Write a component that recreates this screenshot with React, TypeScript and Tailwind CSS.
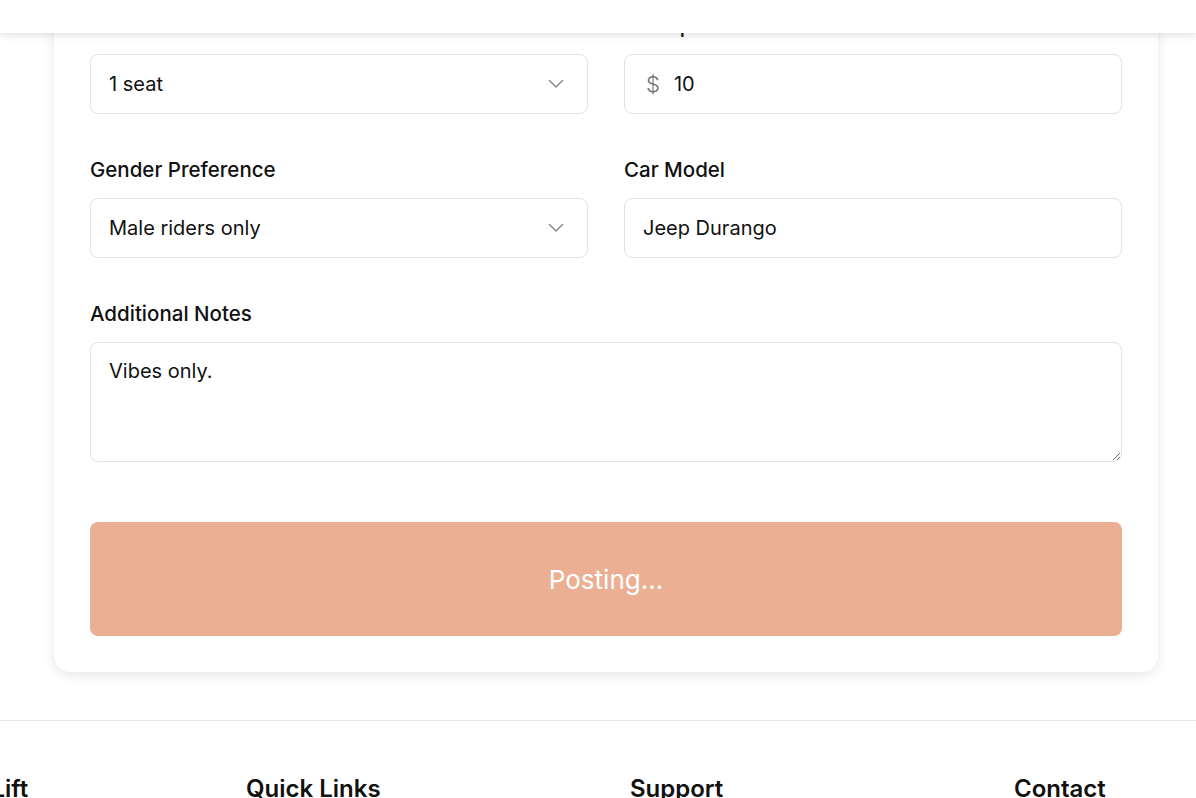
import React from "react";

function Chevron() {
  return (
    <svg width="16" height="10" viewBox="0 0 16 10" fill="none" className="text-[#8a8a8a]">
      <path d="M1.5 1.5 8 8l6.5-6.5" stroke="currentColor" strokeWidth="1.5" strokeLinecap="round" strokeLinejoin="round" />
    </svg>
  );
}

function Field({ label, children }: { label: string; children: React.ReactNode }) {
  return (
    <div className="flex flex-col gap-[14px]">
      <label className="text-[20.5px] leading-[28px] font-medium text-[#111]">{label}</label>
      {children}
    </div>
  );
}

function SelectBox({ value }: { value: string }) {
  return (
    <div className="flex h-[60px] items-center justify-between rounded-lg border border-[#e3e3e3] bg-white pl-[18px] pr-[23px] text-[20px] text-[#111]">
      <span>{value}</span>
      <Chevron />
    </div>
  );
}

function TextBox({ value, prefix }: { value: string; prefix?: string }) {
  return (
    <div
      className={
        prefix
          ? "flex h-[60px] items-center gap-[14px] rounded-lg border border-[#e3e3e3] bg-white px-[21px] text-[20px] text-[#111]"
          : "flex h-[60px] items-center rounded-lg border border-[#e3e3e3] bg-white px-[18px] text-[20px] text-[#111]"
      }
    >
      {prefix && <span className="text-[22px] font-light text-[#707070]">{prefix}</span>}
      <span>{value}</span>
    </div>
  );
}

export default function App() {
  const footerCols = ["Quick Links", "Support", "Contact"];
  return (
    <div className="relative h-[798px] overflow-hidden bg-white font-['Inter',sans-serif] text-[#111]">
      <header className="absolute inset-x-0 top-0 z-10 h-[33px] bg-white shadow-[0_2px_8px_rgba(0,0,0,0.13)]" />

      <main className="-mt-[40px] ml-[54px] w-[1104px]">
        <div className="rounded-2xl bg-white px-9 pt-[52px] pb-9 shadow-[0_3px_12px_rgba(0,0,0,0.1)]">
          <div className="grid grid-cols-2 gap-x-9 gap-y-[42px]">
            <Field label="Seats Available">
              <SelectBox value="1 seat" />
            </Field>
            <Field label="Price per Seat">
              <TextBox prefix="$" value="10" />
            </Field>
            <Field label="Gender Preference">
              <SelectBox value="Male riders only" />
            </Field>
            <Field label="Car Model">
              <TextBox value="Jeep Durango" />
            </Field>
            <div className="col-span-2">
              <Field label="Additional Notes">
                <textarea
                  readOnly
                  value="Vibes only."
                  className="block h-[120px] w-full resize-y rounded-lg border border-[#e3e3e3] bg-white px-[18px] pt-[14px] text-[20px] leading-[28px] text-[#111] outline-none"
                />
              </Field>
            </div>
          </div>

          <button
            disabled
            className="mt-[60px] flex h-[114px] w-full items-center justify-center rounded-lg bg-[#ebb094] text-[26px] text-white"
          >
            Posting...
          </button>
        </div>
      </main>

      <footer className="mt-[48px] border-t border-[#e6e6e6] pt-[52px]">
        <div className="-ml-[138px] grid w-[1536px] grid-cols-4">
          <h3 className="pl-[5px] text-[24px] leading-8 font-semibold text-[#111]">RideShare Lift</h3>
          {footerCols.map((c) => (
            <h3 key={c} className="text-[24px] leading-8 font-semibold text-[#111]">
              {c}
            </h3>
          ))}
        </div>
      </footer>
    </div>
  );
}
